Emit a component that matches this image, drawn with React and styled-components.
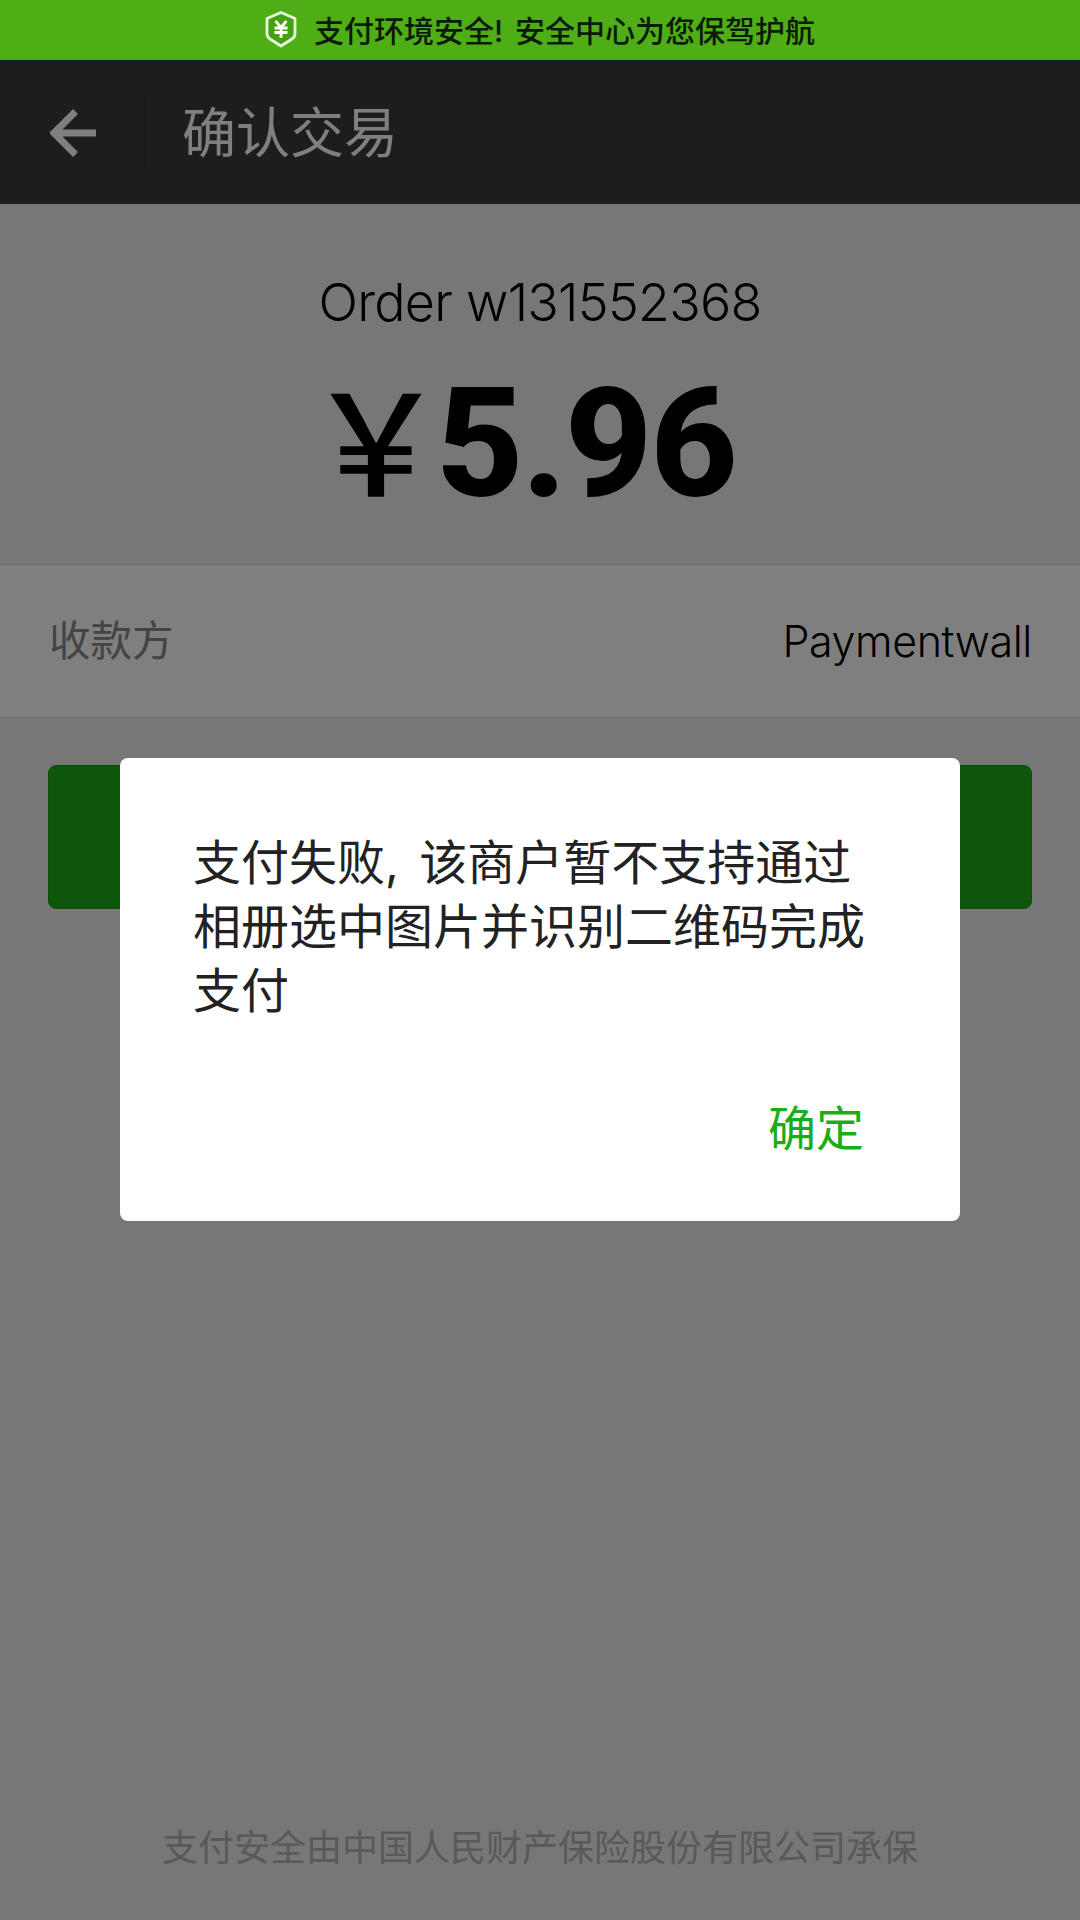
import styled, { createGlobalStyle } from "styled-components";

const GlobalStyle = createGlobalStyle`
  html, body {
    margin: 0;
    padding: 0;
    background: #efefef;
  }
  * {
    box-sizing: border-box;
  }
`;

const CJK = `Inter, "Noto Sans CJK SC", sans-serif`;

const Page = styled.div`
  position: relative;
  width: 1080px;
  height: 1920px;
  display: flex;
  flex-direction: column;
  overflow: hidden;
  font-family: ${CJK};
`;

const Banner = styled.div`
  position: relative;
  z-index: 3;
  height: 60px;
  flex: none;
  display: flex;
  align-items: center;
  justify-content: center;
  gap: 17px;
  background: #4fae16;
  color: #0b1a05;
  font-size: 30px;
  font-weight: 500;
  word-spacing: 4px;
  padding-bottom: 2px;
`;

const NavBar = styled.div`
  height: 144px;
  flex: none;
  display: flex;
  align-items: center;
  background: #393a3f;
`;

const BackButton = styled.div`
  width: 145px;
  height: 72px;
  display: flex;
  align-items: center;
  padding: 2px 0 0 50px;
  border-right: 1px solid #2f3034;
`;

const NavTitle = styled.div`
  margin-left: 37px;
  color: #ffffff;
  font-size: 54px;
  line-height: 70px;
  padding-top: 3px;
`;

const OrderBlock = styled.div`
  height: 360px;
  flex: none;
  display: flex;
  flex-direction: column;
  align-items: center;
  padding-top: 68px;
`;

const OrderName = styled.div`
  color: #000;
  font-size: 52px;
  font-weight: 300;
  line-height: 62px;
  letter-spacing: -0.75px;
`;

const Amount = styled.div`
  margin-top: 16px;
  padding-right: 38px;
  display: flex;
  align-items: baseline;
  color: #000;
  line-height: 170px;
`;

const Yen = styled.span`
  font-family: "Noto Sans CJK SC", sans-serif;
  font-size: 140px;
  font-weight: 500;
`;

const Digits = styled.span`
  margin-left: -10px;
  font-family: Roboto, sans-serif;
  font-size: 152px;
  font-weight: 800;
  letter-spacing: -2px;
`;

const InfoRow = styled.div`
  height: 154px;
  flex: none;
  display: flex;
  align-items: center;
  justify-content: space-between;
  padding: 0 48px 0 49px;
  background: #fff;
  border-top: 1px solid #d9d9d9;
  border-bottom: 1px solid #d9d9d9;
`;

const InfoLabel = styled.span`
  color: #888;
  font-size: 41.5px;
  line-height: 60px;
`;

const InfoValue = styled.span`
  color: #000;
  font-size: 43px;
  font-weight: 350;
  letter-spacing: -0.4px;
`;

const PayButton = styled.div`
  margin: 47px 48px 0;
  height: 144px;
  flex: none;
  border-radius: 8px;
  background: #1aad19;
  border: 1px solid #179b16;
`;

const Footer = styled.div`
  margin-top: auto;
  padding-bottom: 49px;
  text-align: center;
  color: #b2b2b2;
  font-size: 36px;
`;

const Overlay = styled.div`
  position: absolute;
  z-index: 2;
  inset: 60px 0 0 0;
  background: rgba(0, 0, 0, 0.5);
`;

const Dialog = styled.div`
  position: absolute;
  z-index: 4;
  left: 120px;
  top: 758px;
  width: 840px;
  height: 463px;
  padding: 73px 90px 0 73px;
  border-radius: 8px;
  background: #fff;
  display: flex;
  flex-direction: column;
`;

const DialogText = styled.div`
  color: #222;
  font-size: 48px;
  line-height: 64px;
  word-spacing: 7px;
`;

const DialogAction = styled.div`
  margin-top: auto;
  margin-bottom: 60px;
  margin-right: 6px;
  align-self: flex-end;
  color: #1aad19;
  font-size: 48px;
  line-height: 64px;
`;

const ShieldIcon = () => (
  <svg width="32" height="37" viewBox="0 0 32 37">
    <path
      d="M16 1.500 30 7.500v15c0 2.500-1 4.200-3 5.500L16 35 5 28c-2-1.300-3-3-3-5.500v-15Z"
      fill="#46a014"
      stroke="#eaf6e0"
      strokeWidth="2.800"
      strokeLinejoin="round"
    />
    <path
      d="M10.500 10 16 16.500 21.500 10M9.500 17h13M9.500 21.500h13M16 16.500V27"
      fill="none"
      stroke="#fff"
      strokeWidth="2.800"
    />
  </svg>
);

const BackArrow = () => (
  <svg width="46" height="48" viewBox="0 0 46 48">
    <path
      d="M46 24H5M25.500 2.500 4 24l21.500 21.500"
      fill="none"
      stroke="#fff"
      strokeWidth="7"
    />
  </svg>
);

export default function App() {
  return (
    <Page>
      <GlobalStyle />
      <Banner>
        <ShieldIcon />
        <span>支付环境安全! 安全中心为您保驾护航</span>
      </Banner>
      <NavBar>
        <BackButton>
          <BackArrow />
        </BackButton>
        <NavTitle>确认交易</NavTitle>
      </NavBar>
      <OrderBlock>
        <OrderName>Order w131552368</OrderName>
        <Amount>
          <Yen>{"\uFFE5"}</Yen>
          <Digits>5.96</Digits>
        </Amount>
      </OrderBlock>
      <InfoRow>
        <InfoLabel>收款方</InfoLabel>
        <InfoValue>Paymentwall</InfoValue>
      </InfoRow>
      <PayButton />
      <Footer>支付安全由中国人民财产保险股份有限公司承保</Footer>
      <Overlay />
      <Dialog>
        <DialogText>支付失败, 该商户暂不支持通过相册选中图片并识别二维码完成支付</DialogText>
        <DialogAction>确定</DialogAction>
      </Dialog>
    </Page>
  );
}
